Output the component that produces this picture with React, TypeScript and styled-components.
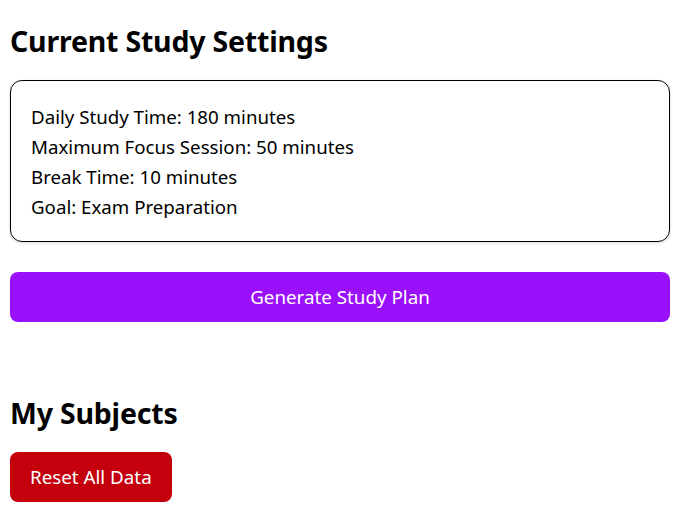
import React from "react";
import styled, { createGlobalStyle } from "styled-components";

const Global = createGlobalStyle`
  html, body { margin: 0; padding: 0; background: #ffffff; }
  body { font-family: "Noto Sans", "Open Sans", sans-serif; color: #000; }
`;

const Page = styled.div`
  display: flex;
  flex-direction: column;
  padding: 23px 3px 24px 10px;
`;

const Heading = styled.h2<{ $top?: number }>`
  margin: ${(p) => p.$top ?? 0}px 0 0 0;
  font-size: 28.5px;
  line-height: 36px;
  font-weight: 700;
  letter-spacing: -0.2px;
`;

const SettingsCard = styled.div`
  margin-top: 21px;
  border: 1px solid #000;
  border-radius: 12px;
  padding: 21px 20px 19px;
  box-shadow: 0 1px 3px rgba(0, 0, 0, 0.15);
  display: flex;
  flex-direction: column;
`;

const SettingLine = styled.div`
  font-size: 18.7px;
  line-height: 30px;
`;

const Button = styled.button<{ $variant: "primary" | "danger"; $full?: boolean }>`
  font-family: inherit;
  font-size: 18.8px;
  color: #fff;
  border: none;
  border-radius: 8px;
  height: 50px;
  padding: 0 20px;
  cursor: pointer;
  background: ${(p) => (p.$variant === "primary" ? "#9b10fb" : "#c4000d")};
  align-self: ${(p) => (p.$full ? "stretch" : "flex-start")};
`;

const PrimaryButton = styled(Button)`
  margin-top: 30px;
`;

const DangerButton = styled(Button)`
  margin-top: 21px;
`;

const settings = [
  "Daily Study Time: 180 minutes",
  "Maximum Focus Session: 50 minutes",
  "Break Time: 10 minutes",
  "Goal: Exam Preparation",
];

export default function App() {
  return (
    <>
      <Global />
      <Page>
        <Heading>Current Study Settings</Heading>
        <SettingsCard>
          {settings.map((s) => (
            <SettingLine key={s}>{s}</SettingLine>
          ))}
        </SettingsCard>
        <PrimaryButton $variant="primary" $full>
          Generate Study Plan
        </PrimaryButton>
        <Heading $top={73}>My Subjects</Heading>
        <DangerButton $variant="danger">Reset All Data</DangerButton>
      </Page>
    </>
  );
}
